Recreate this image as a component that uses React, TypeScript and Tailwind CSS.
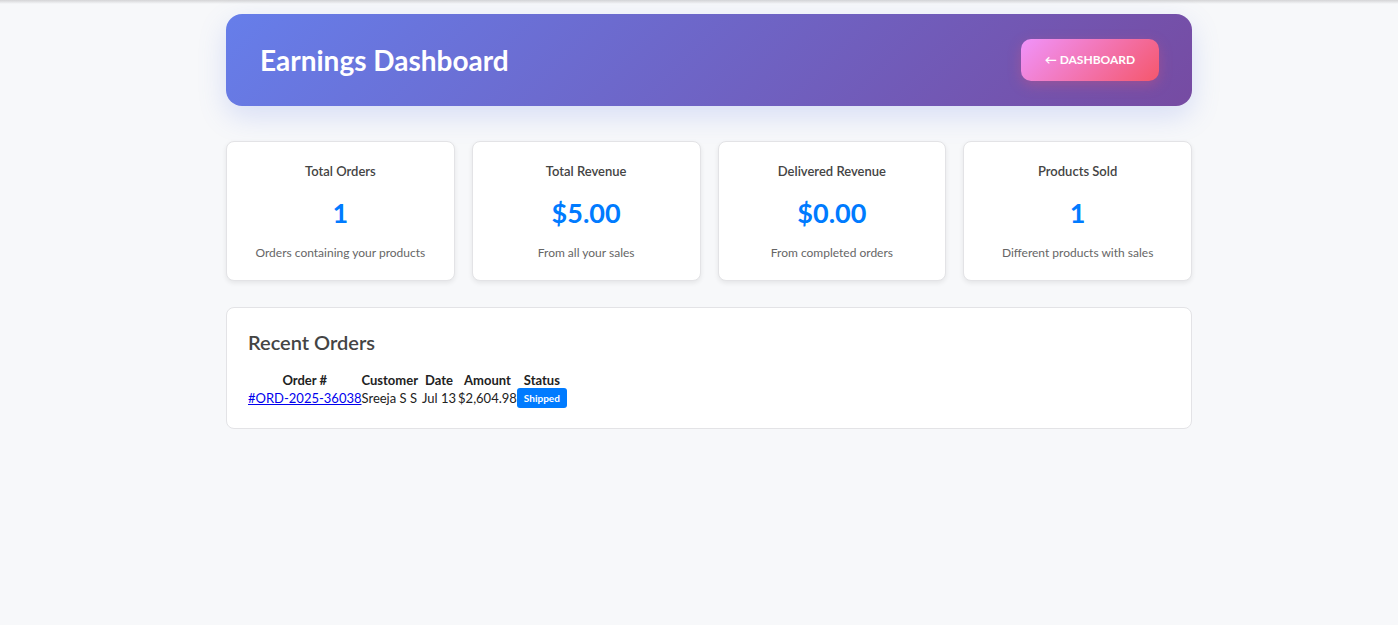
const stats = [
  { title: "Total Orders", value: "1", note: "Orders containing your products" },
  { title: "Total Revenue", value: "$5.00", note: "From all your sales" },
  { title: "Delivered Revenue", value: "$0.00", note: "From completed orders" },
  { title: "Products Sold", value: "1", note: "Different products with sales" },
];

export default function App() {
  return (
    <div className="min-h-screen bg-[#f7f8fa] font-['Lato','Noto_Sans',sans-serif]">
      <div className="h-[4px] bg-gradient-to-b from-[#d4d4d6] to-[#f7f8fa]" />
      <div className="mx-auto w-[986px] pl-5 pt-[10px]">
        <header className="flex h-[92px] items-center justify-between rounded-2xl bg-[linear-gradient(135deg,#667eea_0%,#764ba2_100%)] px-[34px] shadow-[0_10px_28px_rgba(102,126,234,0.22)]">
          <h1 className="text-[28px] font-bold text-white">Earnings Dashboard</h1>
          <button className="mr-[-1px] h-[42px] w-[138px] rounded-[10px] bg-[linear-gradient(135deg,#f093fb_0%,#f5576c_100%)] text-[12px] font-bold text-white shadow-[0_4px_14px_rgba(245,87,108,0.3)]">
            ← DASHBOARD
          </button>
        </header>

        <div className="mt-[35px] grid grid-cols-4 gap-[17px]">
          {stats.map((s) => (
            <div
              key={s.title}
              className="flex h-[140px] flex-col items-center rounded-lg border border-[#e3e3e6] bg-white pt-[20px] shadow-[0_2px_5px_rgba(0,0,0,0.08)]"
            >
              <div className="text-[13px] font-semibold leading-[18px] text-[#444]">{s.title}</div>
              <div className="mt-[13px] text-[27px] font-bold leading-[40px] text-[#007bff]">{s.value}</div>
              <div className="mt-[12px] text-[12px] leading-[16px] text-[#666]">{s.note}</div>
            </div>
          ))}
        </div>

        <div className="mt-[26px] rounded-lg border border-[#e3e3e6] bg-white px-[21px] pb-[20px] pt-[21px]">
          <h3 className="text-[20px] font-semibold leading-[26px] text-[#444]">Recent Orders</h3>
          <table className="mt-[17px] border-collapse text-[13px] text-[#222]">
            <thead>
              <tr className="leading-[16px]">
                <th className="p-0 text-center font-bold">Order #</th>
                <th className="p-0 text-center font-bold">Customer</th>
                <th className="p-0 pl-[4px] text-center font-bold">Date</th>
                <th className="p-0 pl-[2px] text-center font-bold">Amount</th>
                <th className="p-0 text-center font-bold">Status</th>
              </tr>
            </thead>
            <tbody>
              <tr className="leading-[18px]">
                <td className="p-0">
                  <a href="#" className="text-[#0000ee] underline">#ORD-2025-36038</a>
                </td>
                <td className="p-0">Sreeja S S</td>
                <td className="p-0 pl-[4px]">Jul 13</td>
                <td className="p-0 pl-[2px]">$2,604.98</td>
                <td className="p-0">
                  <span className="inline-block rounded-[3px] bg-[#007bff] px-[7px] py-[2px] text-[10px] font-bold leading-[16px] text-white">
                    Shipped
                  </span>
                </td>
              </tr>
            </tbody>
          </table>
        </div>
      </div>
    </div>
  );
}
